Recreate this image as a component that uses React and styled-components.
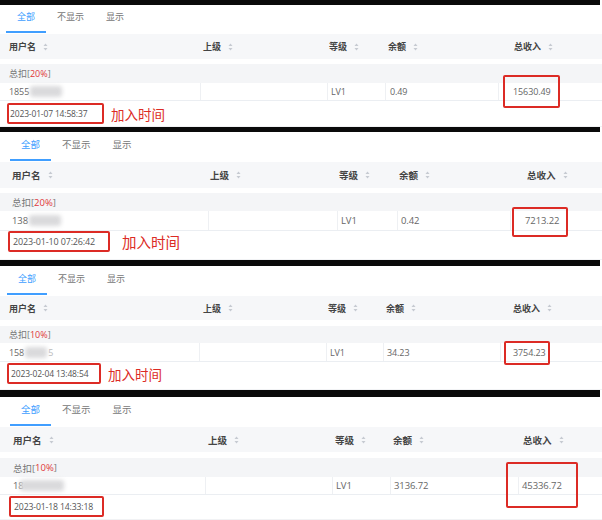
import React from 'react';
import styled, { createGlobalStyle } from 'styled-components';

const Global = createGlobalStyle`
  html, body { margin: 0; padding: 0; background: #fff; }
  body { font-family: "Open Sans", "Noto Sans CJK SC", sans-serif; }
`;

const RED = '#dc2b25';

const Page = styled.div`
  width: 602px;
  height: 520px;
  overflow: hidden;
  background: #fff;
  display: flex;
  flex-direction: column;
`;

const Bar = styled.div`
  flex: none;
  height: ${p => p.$h}px;
  background: #0a0a0a;
  margin-right: 2px;
`;

const PanelBox = styled.section`
  position: relative;
  flex: none;
  display: flex;
  flex-direction: column;
  font-size: ${p => p.$fs}px;
  color: #666;
`;

const TabBar = styled.div`
  display: flex;
  height: ${p => p.$h}px;
  padding-left: ${p => p.$pl}px;
`;

const Tab = styled.div`
  display: flex;
  align-items: center;
  padding: 0 11px 3px;
  box-sizing: border-box;
  border-bottom: 2px solid ${p => (p.$active ? '#409eff' : 'transparent')};
  color: ${p => (p.$active ? '#409eff' : '#777')};
`;

const HeaderRow = styled.div`
  display: grid;
  grid-template-columns: ${p => p.$cols};
  height: ${p => p.$h}px;
  margin-top: 1px;
  background: #f6f7f9;
  align-items: center;
  color: #444;
  font-weight: 700;
`;

const HeadCell = styled.div`
  display: flex;
  align-items: center;
  padding-left: ${p => p.$pl}px;
`;

const SortIcon = styled.svg`
  margin-left: 7px;
  flex: none;
`;

const Spacer = styled.div`
  height: ${p => p.$h}px;
`;

const GroupRow = styled.div`
  display: flex;
  align-items: center;
  height: ${p => p.$h}px;
  padding-left: ${p => p.$pl}px;
  background: #f4f5f7;
  color: #777;
`;

const Pct = styled.span`
  color: #e0383a;
`;

const DataRow = styled.div`
  display: grid;
  grid-template-columns: ${p => p.$cols};
  height: ${p => p.$h}px;
  border-bottom: 1px solid #ebeef2;
  box-sizing: border-box;
`;

const Cell = styled.div`
  display: flex;
  align-items: center;
  padding-left: ${p => p.$pl}px;
  border-left: ${p => (p.$first ? 'none' : '1px solid #eef0f3')};
  color: #666;
  white-space: nowrap;
  letter-spacing: -0.1px;
`;

const Blur = styled.span`
  display: inline-block;
  width: ${p => p.$w}px;
  height: 11px;
  margin-left: ${p => p.$ml}px;
  background: #dadadc;
  border-radius: 3px;
  filter: blur(2px);
`;

const Tail = styled.span`
  color: #bbb;
  margin-left: 1px;
`;

const DateRow = styled.div`
  display: flex;
  align-items: flex-start;
  height: ${p => p.$h}px;
  box-sizing: border-box;
  padding-left: ${p => p.$pl}px;
  padding-top: ${p => p.$pt}px;
  border-bottom: 1px solid #f1f2f4;
`;

const DateBox = styled.div`
  display: flex;
  align-items: center;
  box-sizing: border-box;
  width: ${p => p.$w}px;
  height: 21px;
  padding-left: ${p => p.$pl}px;
  border: 2px solid ${RED};
  border-radius: 2px;
  color: #555;
  font-size: ${p => p.$fs}px;
  letter-spacing: -0.15px;
  white-space: nowrap;
`;

const Label = styled.span`
  display: flex;
  align-items: center;
  height: ${p => p.$h}px;
  margin-left: ${p => p.$ml}px;
  font-size: ${p => p.$fs}px;
  color: ${RED};
  font-family: "Noto Sans CJK SC", sans-serif;
`;

const TotalBox = styled.div`
  position: absolute;
  left: ${p => p.$x}px;
  top: ${p => p.$y}px;
  width: ${p => p.$w}px;
  height: ${p => p.$h}px;
  box-sizing: border-box;
  border: 2px solid ${RED};
  border-radius: 2px;
`;

const Sort = () => (
  <SortIcon width="5" height="8" viewBox="0 0 5 8">
    <path d="M2.5 0.5 L4.5 3 L0.5 3 Z" fill="#c6cad1" />
    <path d="M2.5 7.5 L4.5 5 L0.5 5 Z" fill="#c6cad1" />
  </SortIcon>
);

const panels = [
  {
    bar: 5, fs: 9, tabsH: 28, tabPl: 6, headH: 25, gap: 5, groupH: 19, rowH: 18, dateH: 26,
    div: [200, 327, 385, 498], pads: [9, 3, 2, 3, 16], valPads: [9, 3, 3, 4, 14],
    pct: '20%', user: ['1855', 32, '', 1], level: 'LV1', balance: '0.49', total: '15630.49',
    date: '2023-01-07 14:58:37', dateFs: 8.5, datePt: 2, datePl: 7, dateW: 97, dateTextPl: 1,
    label: { ml: 7, fs: 13.5 }, box: { x: 503, y: 70, w: 57, h: 33 },
  },
  {
    bar: 5, fs: 9.5, tabsH: 29, tabPl: 10, headH: 26, gap: 5, groupH: 18, rowH: 20, dateH: 29,
    div: [208, 337, 397, 510], pads: [12, 2, 2, 2, 17], valPads: [12, 2, 3, 3, 14],
    pct: '20%', user: ['138', 32, '', 1], level: 'LV1', balance: '0.42', total: '7213.22',
    date: '2023-01-10 07:26:42', dateFs: 9, datePt: 0, datePl: 8, dateW: 102, dateTextPl: 3,
    label: { ml: 12, fs: 14.5 }, box: { x: 512, y: 75, w: 56, h: 30 },
  },
  {
    bar: 6, fs: 9, tabsH: 29, tabPl: 7, headH: 24, gap: 6, groupH: 17, rowH: 19, dateH: 28,
    div: [199, 326, 383, 500], pads: [9, 4, 2, 3, 13], valPads: [9, 4, 3, 3, 12],
    pct: '10%', user: ['158', 22, '5', 1], level: 'LV1', balance: '34.23', total: '3754.23',
    date: '2023-02-04 13:48:54', dateFs: 8.5, datePt: 1, datePl: 7, dateW: 94, dateTextPl: 2,
    label: { ml: 7, fs: 13.5 }, box: { x: 504, y: 75, w: 46, h: 24 },
  },
  {
    bar: 7, fs: 9.5, tabsH: 29, tabPl: 10, headH: 25, gap: 6, groupH: 19, rowH: 18, dateH: 25,
    div: [205, 332, 390, 518], pads: [13, 3, 3, 3, 5], valPads: [13, 3, 3, 3, 3],
    pct: '10%', user: ['18', 44, '', -4], level: 'LV1', balance: '3136.72', total: '45336.72',
    date: '2023-01-18 14:33:18', dateFs: 8.7, datePt: 1, datePl: 9, dateW: 95, dateTextPl: 3,
    label: null, box: { x: 506, y: 65, w: 72, h: 46 },
  },
];

const heads = ['用户名', '上级', '等级', '余额', '总收入'];

function Panel({ c }) {
  const d = c.div;
  const cols = `${d[0]}px ${d[1] - d[0]}px ${d[2] - d[1]}px ${d[3] - d[2]}px 1fr`;
  const vals = [null, '', c.level, c.balance, c.total];
  return (
    <>
      <Bar $h={c.bar} />
      <PanelBox $fs={c.fs}>
        <TabBar $h={c.tabsH} $pl={c.tabPl}>
          <Tab $active>全部</Tab>
          <Tab>不显示</Tab>
          <Tab>显示</Tab>
        </TabBar>
        <HeaderRow $h={c.headH} $cols={cols}>
          {heads.map((h, i) => (
            <HeadCell key={h} $pl={c.pads[i]}>
              {h}
              <Sort />
            </HeadCell>
          ))}
        </HeaderRow>
        <Spacer $h={c.gap} />
        <GroupRow $h={c.groupH} $pl={c.pads[0]}>
          总扣[<Pct>{c.pct}</Pct>]
        </GroupRow>
        <DataRow $h={c.rowH} $cols={cols}>
          {vals.map((v, i) => (
            <Cell key={i} $first={i === 0} $pl={c.valPads[i]}>
              {i === 0 ? (
                <>
                  {c.user[0]}
                  <Blur $w={c.user[1]} $ml={c.user[3]} />
                  {c.user[2] && <Tail>{c.user[2]}</Tail>}
                </>
              ) : (
                v
              )}
            </Cell>
          ))}
        </DataRow>
        <DateRow $h={c.dateH} $pl={c.datePl} $pt={c.datePt}>
          <DateBox $w={c.dateW} $pl={c.dateTextPl} $fs={c.dateFs}>{c.date}</DateBox>
          {c.label && (
            <Label $h={21} $ml={c.label.ml} $fs={c.label.fs}>
              加入时间
            </Label>
          )}
        </DateRow>
        <TotalBox $x={c.box.x} $y={c.box.y} $w={c.box.w} $h={c.box.h} />
      </PanelBox>
    </>
  );
}

export default function App() {
  return (
    <>
      <Global />
      <Page>
        {panels.map((c, i) => (
          <Panel key={i} c={c} />
        ))}
      </Page>
    </>
  );
}
